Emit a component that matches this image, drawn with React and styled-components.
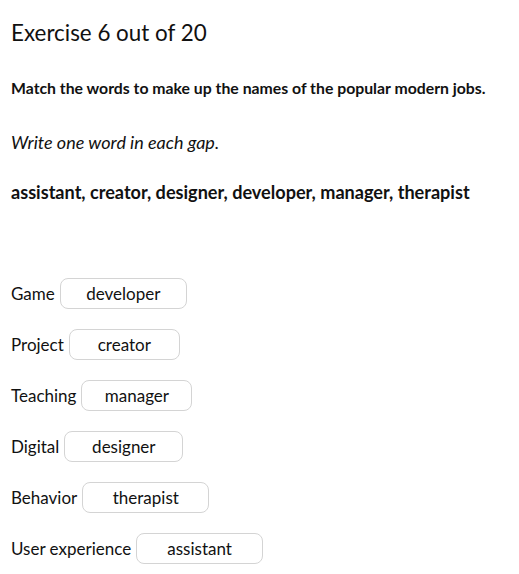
import React from 'react';
import styled, { createGlobalStyle } from 'styled-components';

const GlobalStyle = createGlobalStyle`
  body {
    margin: 0;
    background: #fff;
    color: #111;
    font-family: Lato, "Liberation Sans", sans-serif;
  }
`;

const Page = styled.div`
  padding: 18px 11px 0 11px;
`;

const Title = styled.h1`
  margin: 0;
  font-size: 22.4px;
  font-weight: 400;
  line-height: 30px;
`;

const Instruction = styled.p`
  margin: 29px 0 0;
  font-size: 15.8px;
  font-weight: 700;
  line-height: 22px;
`;

const Hint = styled.p`
  margin: 31px 0 0;
  font-size: 18px;
  font-style: italic;
  line-height: 24px;
`;

const WordBank = styled.p`
  margin: 26px 0 0;
  font-size: 18.1px;
  font-weight: 700;
  line-height: 24px;
`;

const Rows = styled.div`
  display: flex;
  flex-direction: column;
  gap: 20px;
  margin-top: 74px;
`;

const Row = styled.div`
  display: flex;
  align-items: center;
  gap: 5px;
  font-size: 17px;
`;

const Gap = styled.span`
  display: flex;
  align-items: center;
  justify-content: center;
  box-sizing: border-box;
  width: ${p => p.$w}px;
  height: 31px;
  border: 1px solid #d4d4d4;
  border-radius: 8px;
  font-size: 17px;
`;

const rows = [
  ['Game', 'developer', 127],
  ['Project', 'creator', 111],
  ['Teaching', 'manager', 111],
  ['Digital', 'designer', 119],
  ['Behavior', 'therapist', 127],
  ['User experience', 'assistant', 127],
];

export default function App() {
  return (
    <Page>
      <GlobalStyle />
      <Title>Exercise 6 out of 20</Title>
      <Instruction>Match the words to make up the names of the popular modern jobs.</Instruction>
      <Hint>Write one word in each gap.</Hint>
      <WordBank>assistant, creator, designer, developer, manager, therapist</WordBank>
      <Rows>
        {rows.map(([label, word, w]) => (
          <Row key={label}>
            {label}
            <Gap $w={w}>{word}</Gap>
          </Row>
        ))}
      </Rows>
    </Page>
  );
}
